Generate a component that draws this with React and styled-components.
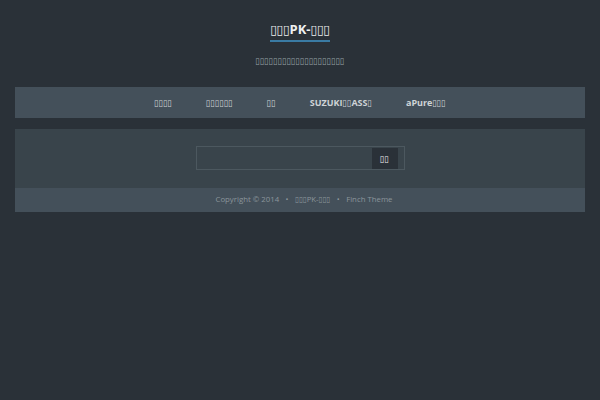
import React from "react";
import styled, { createGlobalStyle } from "styled-components";

const Global = createGlobalStyle`
  html, body { margin: 0; padding: 0; background: #2a3138; }
  body { font-family: "Open Sans", "DejaVu Sans Condensed", "DejaVu Sans", sans-serif; }
  * { box-sizing: border-box; }
`;

const Page = styled.div`
  min-height: 400px;
  background: #2a3138;
  padding: 0 15px;
`;

const Header = styled.header`
  display: flex;
  flex-direction: column;
  align-items: center;
  padding-top: 21px;
  height: 87px;
`;

const Title = styled.a`
  font-size: 13px;
  font-weight: bold;
  color: #eef0f1;
  text-decoration: none;
  line-height: 16px;
  padding-bottom: 3px;
  border-bottom: 2px solid #3a7ba3;
`;

const Tagline = styled.p`
  margin: 13px 0 0;
  font-size: 9px;
  line-height: 12px;
  color: #98a1a6;
`;

const Nav = styled.nav`
  height: 31px;
  background: #44505a;
  display: flex;
  justify-content: center;
  align-items: center;
  gap: 34px;
  padding-bottom: 1px;
`;

const NavItem = styled.a`
  font-size: 9px;
  font-weight: bold;
  color: #cfd4d7;
  text-decoration: none;
`;

const Main = styled.main`
  margin-top: 11px;
  background: #39444b;
  height: 59px;
  display: flex;
  justify-content: center;
  padding-top: 17px;
`;

const SearchForm = styled.form`
  width: 209px;
  height: 24px;
  border: 1px solid #4c585f;
  display: flex;
  justify-content: flex-end;
  align-items: center;
  padding: 1px 6px 1px 0;
`;

const SearchButton = styled.button`
  width: 26px;
  height: 21px;
  border: none;
  background: #2a3138;
  color: #f0f0f0;
  font-family: inherit;
  font-size: 9px;
  padding: 0;
`;

const Footer = styled.footer`
  height: 24px;
  background: #44505a;
  display: flex;
  justify-content: center;
  align-items: center;
  gap: 6.5px;
  font-size: 7.8px;
  color: #8b959b;
  padding: 0 0 2px 8px;
`;

const Dot = styled.span`
  color: #8b959b;
`;

export default function App() {
  return (
    <>
      <Global />
      <Page>
        <Header>
          <Title href="#">▯▯▯PK-▯▯▯</Title>
          <Tagline>▯▯▯▯▯▯▯▯▯▯▯▯▯▯▯▯▯▯▯▯</Tagline>
        </Header>
        <Nav>
          <NavItem href="#">▯▯▯▯</NavItem>
          <NavItem href="#">▯▯▯▯▯▯</NavItem>
          <NavItem href="#">▯▯</NavItem>
          <NavItem href="#">SUZUKI▯▯ASS▯</NavItem>
          <NavItem href="#">aPure▯▯▯</NavItem>
        </Nav>
        <Main>
          <SearchForm onSubmit={(e) => e.preventDefault()}>
            <SearchButton type="submit">▯▯</SearchButton>
          </SearchForm>
        </Main>
        <Footer>
          <span>Copyright © 2014</span>
          <Dot>•</Dot>
          <span>▯▯▯PK-▯▯▯</span>
          <Dot>•</Dot>
          <span>Finch Theme</span>
        </Footer>
      </Page>
    </>
  );
}
